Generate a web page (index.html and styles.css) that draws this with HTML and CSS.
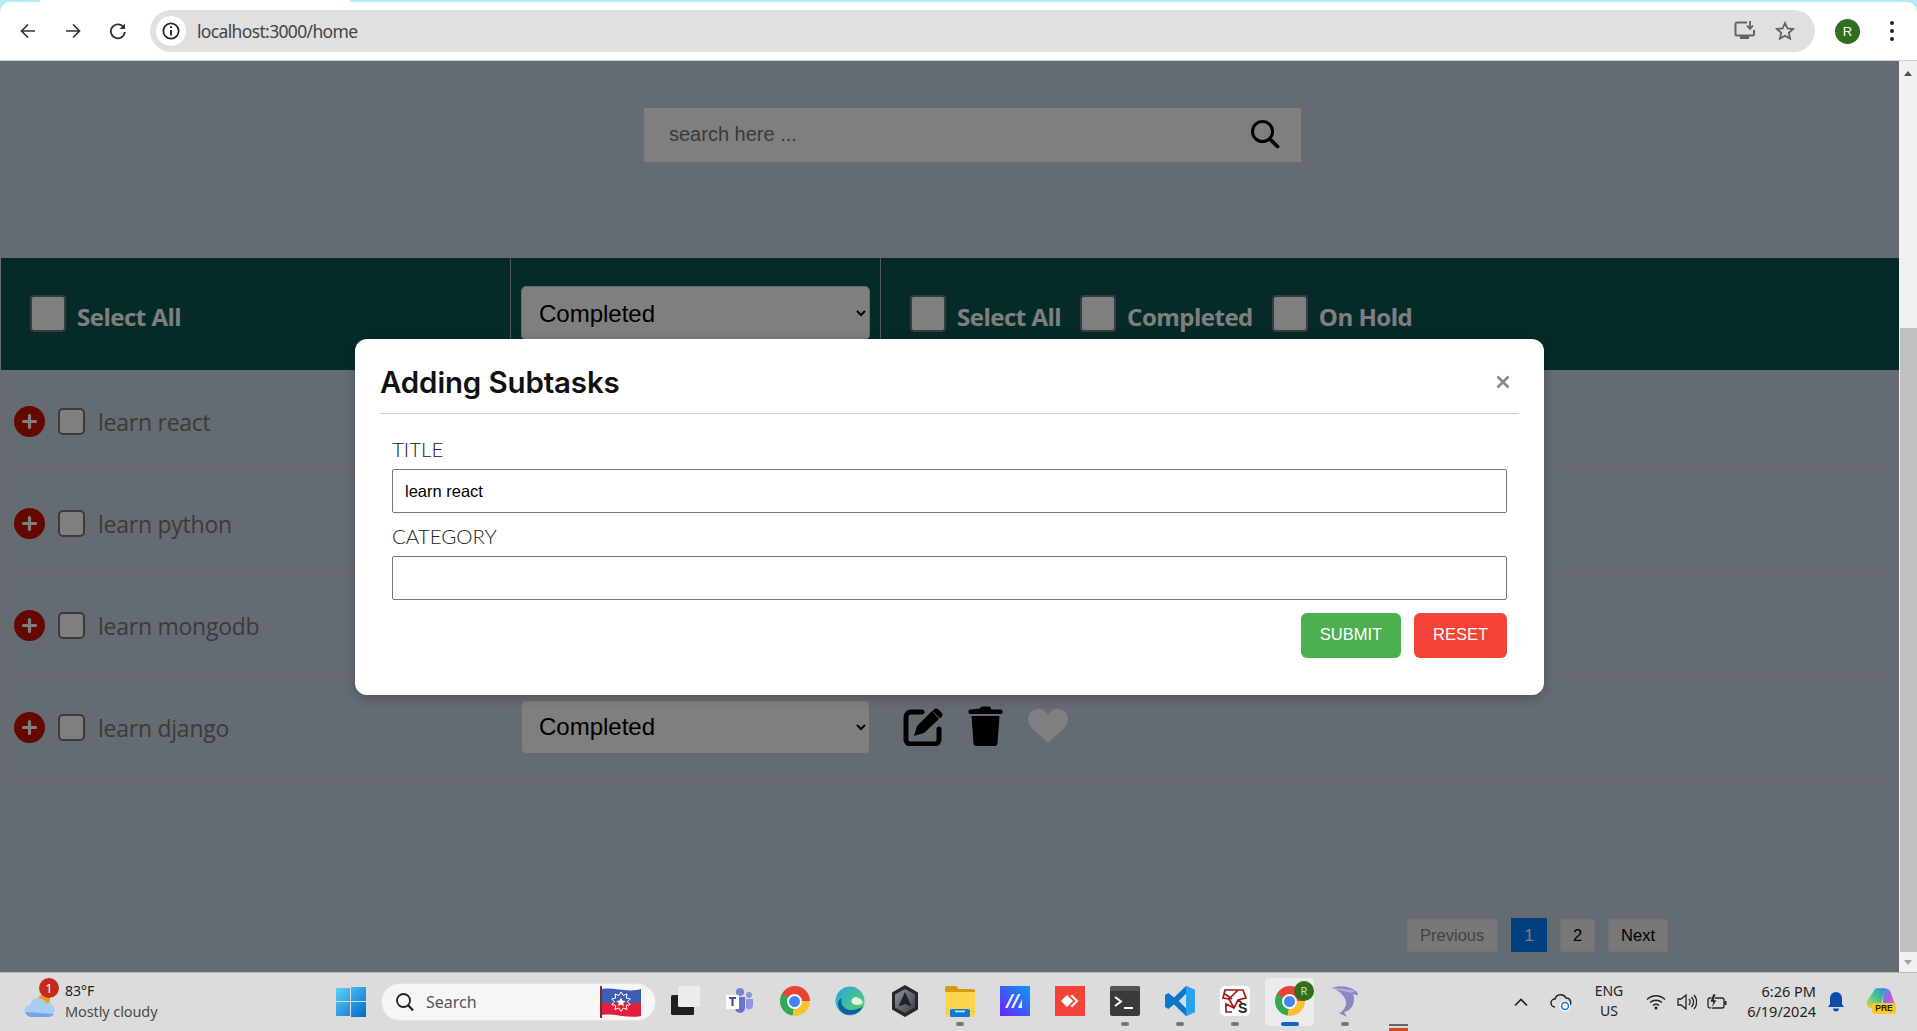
FILE: index.html
```html
<!DOCTYPE html>
<html lang="en">
<head>
<meta charset="utf-8">
<title>localhost:3000/home</title>
<link rel="stylesheet" href="styles.css">
</head>
<body>
<svg class="defs" width="0" height="0">
  <symbol id="i-edit" viewBox="0 0 40 40">
    <path d="M19 6H8a5 5 0 0 0-5 5v23a4 4 0 0 0 4 4h25a4 4 0 0 0 4-4V23" fill="none" stroke="#000" stroke-width="5" stroke-linecap="round"/>
    <path d="M11 30l3-10L29 5l7 8-15 14z" fill="#000"/>
    <path d="M31 3.500a3 3 0 0 1 4.500 0l3 3a3 3 0 0 1 0 4.500l-1.500 1.500-7.500-7.500z" fill="#000"/>
  </symbol>
  <symbol id="i-trash" viewBox="0 0 35 40">
    <path d="M12 2.500a2.500 2.500 0 0 1 2.500-2h6a2.500 2.500 0 0 1 2.500 2v1h9.500a2.200 2.200 0 0 1 0 4.500h-30a2.200 2.200 0 0 1 0-4.500z" fill="#000"/>
    <path d="M3.500 10h28l-2 27a3 3 0 0 1-3 3h-18a3 3 0 0 1-3-3z" fill="#000"/>
  </symbol>
  <symbol id="i-heart" viewBox="0 0 40 35">
    <path d="M20 35L3.500 19.500C-1 15-1 8 3 4c4.500-4.500 11.500-4 15 0l2 2.500 2-2.500c3.500-4 10.500-4.500 15 0 4 4 4 11-.5 15.500z" fill="#fff"/>
  </symbol>
  <symbol id="i-plus" viewBox="0 0 31 31">
    <circle cx="15.500" cy="15.500" r="15.500" fill="#c81000"/>
    <path d="M15.500 9.500v12M9.500 15.500h12" stroke="#fff" stroke-width="3.200" stroke-linecap="round"/>
  </symbol>
</svg>

<header class="browser">
  <div class="toolbar">
    <button class="nav-btn" aria-label="Back"><svg width="20" height="20" viewBox="0 0 20 20"><path d="M17 10H4M10 3.500L3.500 10l6.500 6.500" fill="none" stroke="#333" stroke-width="1.700"/></svg></button>
    <button class="nav-btn" aria-label="Forward"><svg width="20" height="20" viewBox="0 0 20 20"><path d="M3 10h13M10 3.500l6.500 6.500-6.500 6.500" fill="none" stroke="#333" stroke-width="1.700"/></svg></button>
    <button class="nav-btn" aria-label="Reload"><svg width="20" height="20" viewBox="0 0 20 20"><path d="M16 7a7 7 0 1 0 .8 4" fill="none" stroke="#333" stroke-width="1.800"/><path d="M17 2.500V8h-5.500z" fill="#333"/></svg></button>
    <div class="omnibox">
      <span class="site-info"><svg width="20" height="20" viewBox="0 0 20 20"><circle cx="10" cy="10" r="7.700" fill="none" stroke="#222" stroke-width="1.700"/><path d="M10 9v5.500" stroke="#222" stroke-width="1.900"/><circle cx="10" cy="6.200" r="1.100" fill="#222"/></svg></span>
      <span class="url">localhost:3000/home</span>
      <span class="omni-right">
        <svg width="22" height="20" viewBox="0 0 22 20"><path d="M13 1.500H3a1.500 1.500 0 0 0-1.500 1.500v10A1.500 1.500 0 0 0 3 14.500h15.500a1.500 1.500 0 0 0 1.500-1.500V9" fill="none" stroke="#5f6368" stroke-width="2"/><path d="M6 15h9v3H6z" fill="#5f6368"/><path d="M16 0v7M13 4.500l3 3.300 3-3.300" fill="none" stroke="#5f6368" stroke-width="1.800"/></svg>
        <svg width="20" height="20" viewBox="0 0 20 20"><path d="M10 2l2.400 5.400 5.800.6-4.400 3.900 1.300 5.700L10 14.700l-5.100 2.900 1.300-5.700L1.800 8l5.800-.6z" fill="none" stroke="#5f6368" stroke-width="1.800"/></svg>
      </span>
    </div>
    <span class="avatar">R</span>
    <span class="kebab"><i></i><i></i><i></i></span>
  </div>
</header>

<div class="viewport">
  <main class="page">
    <section class="search-wrap">
      <div class="search-box">
        <input class="search-input" type="text" placeholder="search here ...">
        <svg class="search-icon" width="30" height="30" viewBox="0 0 30 30"><circle cx="12.500" cy="12.500" r="10" fill="none" stroke="#000" stroke-width="3"/><path d="M20 20l7.500 7.500" stroke="#000" stroke-width="3.800" stroke-linecap="round"/></svg>
      </div>
    </section>

    <section class="tasks">
      <div class="tasks-head">
        <div class="head-cell head-first">
          <label class="head-check"><input class="check-lg" type="checkbox"><span>Select All</span></label>
        </div>
        <div class="head-cell head-second">
          <select class="status"><option>Completed</option></select>
        </div>
        <div class="head-cell head-third">
          <label class="head-check"><input class="check-lg" type="checkbox"><span>Select All</span></label>
          <label class="head-check"><input class="check-lg" type="checkbox"><span>Completed</span></label>
          <label class="head-check"><input class="check-lg" type="checkbox"><span>On Hold</span></label>
        </div>
      </div>

      <div class="task-row">
        <div class="task-name"><svg class="plus"><use href="#i-plus"/></svg><input class="check" type="checkbox"><span>learn react</span></div>
        <div class="task-status"><select class="status"><option>Completed</option></select></div>
        <div class="task-actions"><svg class="ic-edit"><use href="#i-edit"/></svg><svg class="ic-trash"><use href="#i-trash"/></svg><svg class="ic-heart"><use href="#i-heart"/></svg></div>
      </div>
      <div class="task-row">
        <div class="task-name"><svg class="plus"><use href="#i-plus"/></svg><input class="check" type="checkbox"><span>learn python</span></div>
        <div class="task-status"><select class="status"><option>Completed</option></select></div>
        <div class="task-actions"><svg class="ic-edit"><use href="#i-edit"/></svg><svg class="ic-trash"><use href="#i-trash"/></svg><svg class="ic-heart"><use href="#i-heart"/></svg></div>
      </div>
      <div class="task-row">
        <div class="task-name"><svg class="plus"><use href="#i-plus"/></svg><input class="check" type="checkbox"><span>learn mongodb</span></div>
        <div class="task-status"><select class="status"><option>Completed</option></select></div>
        <div class="task-actions"><svg class="ic-edit"><use href="#i-edit"/></svg><svg class="ic-trash"><use href="#i-trash"/></svg><svg class="ic-heart"><use href="#i-heart"/></svg></div>
      </div>
      <div class="task-row">
        <div class="task-name"><svg class="plus"><use href="#i-plus"/></svg><input class="check" type="checkbox"><span>learn django</span></div>
        <div class="task-status"><select class="status"><option>Completed</option></select></div>
        <div class="task-actions"><svg class="ic-edit"><use href="#i-edit"/></svg><svg class="ic-trash"><use href="#i-trash"/></svg><svg class="ic-heart"><use href="#i-heart"/></svg></div>
      </div>
    </section>

    <nav class="pager">
      <a class="pg pg-muted">Previous</a>
      <a class="pg pg-active">1</a>
      <a class="pg pg-num">2</a>
      <a class="pg">Next</a>
    </nav>

    <div class="backdrop">
      <div class="modal">
        <div class="modal-head">
          <h2 class="modal-title">Adding Subtasks</h2>
          <svg class="modal-close" width="14" height="14" viewBox="0 0 14 14"><path d="M1.500 1.500l11 11M12.500 1.500l-11 11" stroke="#8a8a8a" stroke-width="2.600"/></svg>
        </div>
        <form class="modal-body">
          <label class="field-label">TITLE</label>
          <input class="field" type="text" value="learn react">
          <label class="field-label">CATEGORY</label>
          <input class="field" type="text">
          <div class="modal-actions">
            <button class="btn btn-submit" type="button">SUBMIT</button>
            <button class="btn btn-reset" type="button">RESET</button>
          </div>
        </form>
      </div>
    </div>
  </main>
  <aside class="scrollbar">
    <div class="sb-btn"><i class="tri-up"></i></div>
    <div class="sb-track"></div>
    <div class="sb-thumb"></div>
    <div class="sb-btn sb-btn-down"><i class="tri-down"></i></div>
  </aside>
</div>

<footer class="taskbar">
  <div class="weather">
    <span class="weather-icon">
      <svg width="32" height="30" viewBox="0 0 32 30"><circle cx="20" cy="11" r="6" fill="#f39a1e"/><path d="M7 28a6 6 0 0 1-1-12 8.500 8.500 0 0 1 16-2 7 7 0 0 1 3 14z" fill="#a9cdf0"/><path d="M2 23a5 5 0 0 0 5 5h18a7 7 0 0 0 5-3z" fill="#6fa8e3"/></svg>
      <b class="badge">1</b>
    </span>
    <span class="weather-text"><span class="w-temp">83°F</span><span class="w-desc">Mostly cloudy</span></span>
  </div>
  <span class="win-logo">
    <svg width="30" height="30" viewBox="0 0 30 30"><defs><linearGradient id="wg" x1="0" y1="0" x2="1" y2="1"><stop offset="0" stop-color="#5fd4fb"/><stop offset="1" stop-color="#0068c9"/></linearGradient></defs><path d="M0 1h14v13H0zM15 0h15v14H15zM0 15h14v14H0zM15 15h15v15H15z" fill="url(#wg)"/></svg>
  </span>
  <div class="ts-search">
    <svg width="20" height="20" viewBox="0 0 20 20"><circle cx="8.500" cy="8.500" r="6.500" fill="none" stroke="#222" stroke-width="1.800"/><path d="M13 13l5 5.500" stroke="#222" stroke-width="2.200"/></svg>
    <span class="ts-label">Search</span>
    <svg class="ts-flag" width="44" height="32" viewBox="0 0 44 32"><path d="M2 0v32" stroke="#7a2c2c" stroke-width="2"/><path d="M3 3c12-2 26 4 39 0v14H3z" fill="#3e5eb1"/><path d="M3 17h39v13c-13 3-26-3-39-1z" fill="#e3203c"/><path d="M22 6l2.200 3.500 3.800-1.500-.7 4 4 1-3 2.700 3 2.800-4 1 .7 4-3.800-1.500L22 25.500 19.800 22 16 23.500l.7-4-4-1 3-2.800-3-2.700 4-1-.7-4 3.800 1.500z" fill="none" stroke="#fff" stroke-width="1"/><path d="M22 11.500l1.400 3 3.200.4-2.400 2.100.7 3.200-2.900-1.700-2.900 1.700.7-3.200-2.400-2.100 3.200-.4z" fill="#fff"/></svg>
  </div>
  <div class="apps">
    <span class="app"><svg width="30" height="30" viewBox="0 0 30 30"><rect x="1" y="9" width="23" height="20" rx="1.500" fill="#1f1f1f"/><rect x="8" y="0" width="22" height="21" rx="1.500" fill="#ececec"/></svg></span>
    <span class="app"><svg width="30" height="30" viewBox="0 0 30 30"><circle cx="15" cy="6" r="4" fill="#7b83d6"/><circle cx="24" cy="9" r="3" fill="#8f96e0"/><path d="M10 11h10v11a5 5 0 0 1-10 0z" fill="#6a72c9"/><path d="M21 13h7v7a4 4 0 0 1-7 2z" fill="#8f96e0"/><rect x="1" y="9" width="13" height="14" fill="#fff"/><path d="M4 12h7M7.500 12v8" stroke="#4b53a8" stroke-width="2.200"/></svg></span>
    <span class="app"><span class="chrome"></span></span>
    <span class="app"><svg width="30" height="30" viewBox="0 0 30 30"><defs><linearGradient id="eg" x1="0" y1="0" x2="1" y2="1"><stop offset="0" stop-color="#2aa5df"/><stop offset="1" stop-color="#5ed45c"/></linearGradient></defs><circle cx="15" cy="15" r="14.500" fill="url(#eg)"/><path d="M28 20C25 28 15 31 8 27 2 23 1 14 7 12c-3 6 3 13 10 12 5-.5 9-2 11-4z" fill="#0c5fa8"/><path d="M28 17c-1-5-8-8-11-4-2 3 1 6 5 6 3 0 5-1 6-2z" fill="#dff3df"/></svg></span>
    <span class="app"><svg width="28" height="32" viewBox="0 0 28 32"><defs><linearGradient id="hg" x1="0" y1="0" x2="1" y2="1"><stop offset="0" stop-color="#8d949b"/><stop offset="1" stop-color="#3a3f45"/></linearGradient></defs><path d="M14 0l13 7.500v17L14 32 1 24.500v-17z" fill="#24272b"/><path d="M14 4l10 5.500v13L14 28 4 22.500v-13z" fill="url(#hg)"/><path d="M14 7l6.500 14.500L14 19l-6.500 2.500z" fill="#1f2226"/></svg></span>
    <span class="app app-open"><svg width="30" height="32" viewBox="0 0 30 32"><path d="M0 3a2 2 0 0 1 2-2h9l3 3h14a2 2 0 0 1 2 2v4H0z" fill="#d89a12"/><path d="M0 7h30v23a2 2 0 0 1-2 2H2a2 2 0 0 1-2-2z" fill="#fdd44f"/><rect x="5" y="24" width="20" height="8" rx="1.500" fill="#0f78d4"/><rect x="10" y="25.500" width="10" height="1.800" fill="#bfe0fa"/></svg></span>
    <span class="app"><svg width="30" height="30" viewBox="0 0 30 30"><defs><linearGradient id="mg" x1="0" y1="1" x2="1" y2="0"><stop offset="0" stop-color="#6a22f5"/><stop offset="1" stop-color="#0a9cf5"/></linearGradient></defs><rect width="30" height="30" fill="url(#mg)"/><path d="M5 22l7-14h2.500l-7 14zM11 22l7-14h2.500l-7 14zM18 22l4-9v9z" fill="#e8eefc"/></svg></span>
    <span class="app"><svg width="30" height="30" viewBox="0 0 30 30"><rect width="30" height="30" fill="#f44236"/><path d="M12 9l6 6-6 6-6-6z" fill="#fff"/><path d="M17 8.500l6.500 6.500-6.500 6.500-1.500-1.500 5-5-5-5z" fill="#fff"/></svg></span>
    <span class="app app-open"><svg width="30" height="30" viewBox="0 0 30 30"><rect width="30" height="30" rx="2.500" fill="#3a3a3a"/><path d="M0 2.500A2.500 2.500 0 0 1 2.500 0h27v5H0z" fill="#555"/><path d="M5 11l6 4.500-6 4.500" fill="none" stroke="#fff" stroke-width="2"/><path d="M14 22h9" stroke="#fff" stroke-width="2"/></svg></span>
    <span class="app app-open"><svg width="30" height="30" viewBox="0 0 30 30"><path d="M21 0l9 4v22l-9 4-12-11.500L3.500 23 0 21v-12l3.500-2L9 11.500zM21 8l-7 7 7 7z" fill="#0e78c8"/><path d="M21 0l9 4v22l-9 4z" fill="#2aa3ef"/><path d="M21 8l-7 7 7 7z" fill="#dcdcdc"/></svg></span>
    <span class="app app-open"><svg width="30" height="30" viewBox="0 0 30 30"><rect width="30" height="30" rx="5" fill="#fff"/><path d="M5 4h18l3 8-8 2-4 8-5-9-6-1zM9 13l9-9M14 22l-8-4V26h6M18 14l4 3M5 8l7 5" fill="none" stroke="#a5161b" stroke-width="1.700"/><text class="ks-s" x="18" y="27">S</text></svg></span>
    <span class="app app-active"><span class="chrome chrome-sm"></span><b class="app-badge">R</b></span>
    <span class="app app-open"><svg width="28" height="32" viewBox="0 0 28 32"><path d="M1 3c8-3 17-2 24 3 3 2 2 5 0 4l-3-1c2 5 1 11-3 15-2 2-4 3-6 3l3 5-8-4c3-1 6-4 7-9C16 14 10 6 1 3z" fill="#8a86c9"/><path d="M1 3c6 0 15 1 24 3l-5 2C14 6 8 6 1 3z" fill="#b3b0e0"/></svg></span>
  </div>
  <span class="tray-glitch"></span>
  <div class="tray">
    <svg class="tray-chevron" width="16" height="10" viewBox="0 0 16 10"><path d="M2 8.500l6-6 6 6" fill="none" stroke="#222" stroke-width="1.700"/></svg>
    <svg class="tray-cloud" width="22" height="20" viewBox="0 0 22 20"><path d="M5 15a4 4 0 0 1 0-8 6 6 0 0 1 11-1 4.500 4.500 0 0 1 3 8" fill="#dcdcdc" stroke="#222" stroke-width="1.500"/><circle cx="15" cy="14" r="5.500" fill="#fff"/><circle cx="15" cy="14" r="3.500" fill="none" stroke="#0f78d4" stroke-width="1.500"/></svg>
    <span class="lang"><span>ENG</span><span>US</span></span>
    <svg class="tray-wifi" width="20" height="16" viewBox="0 0 20 16"><path d="M1 5.500c5-5 13-5 18 0M4 8.500c3.500-3 8.500-3 12 0M7 11.500c1.800-1.400 4.200-1.400 6 0" fill="none" stroke="#222" stroke-width="1.400"/><circle cx="10" cy="14" r="1.500" fill="#222"/></svg>
    <svg class="tray-vol" width="20" height="18" viewBox="0 0 20 18"><path d="M1 6h3l5-4v14l-5-4H1z" fill="none" stroke="#222" stroke-width="1.300"/><path d="M12 6c1.500 2 1.500 4 0 6M14.500 4c2.500 3 2.500 7 0 10M17 2c3.500 4 3.500 10 0 14" fill="none" stroke="#222" stroke-width="1.300"/></svg>
    <svg class="tray-batt" width="20" height="18" viewBox="0 0 20 18"><rect x="1" y="5" width="16" height="10" rx="2" fill="none" stroke="#222" stroke-width="1.300"/><rect x="17.500" y="8" width="2" height="4" fill="#222"/><path d="M6 1L3 9h3l-2 7 6-9H7l2-6z" fill="#222" stroke="#dcdcdc" stroke-width=".7"/></svg>
    <span class="clock"><span>6:26 PM</span><span>6/19/2024</span></span>
    <svg class="tray-bell" width="16" height="20" viewBox="0 0 16 20"><path d="M8 0a6 6 0 0 1 6 6v6l2 3H0l2-3V6a6 6 0 0 1 6-6z" fill="#0a4dae"/><path d="M5 16.500h6c0 2-1.300 3-3 3s-3-1-3-3z" fill="#0a4dae"/></svg>
    <span class="copilot">
      <svg width="30" height="26" viewBox="0 0 28 24"><defs><linearGradient id="cg1" x1="0" y1="1" x2="1" y2="0"><stop offset="0" stop-color="#f7d23e"/><stop offset=".5" stop-color="#4cc78a"/><stop offset="1" stop-color="#2a8ae8"/></linearGradient><linearGradient id="cg2" x1="0" y1="0" x2="1" y2="1"><stop offset="0" stop-color="#2aa0e8"/><stop offset=".5" stop-color="#b45be0"/><stop offset="1" stop-color="#f26aa5"/></linearGradient></defs><path d="M9 1h9l-5 19H5C1 20 0 16 1 13z" fill="url(#cg1)"/><path d="M17 1c3 0 5 1 6 4l4 11c1 3-1 5-4 5h-8z" fill="url(#cg2)"/></svg>
      <b class="pre">PRE</b>
    </span>
  </div>
</footer>
</body>
</html>
```
FILE: styles.css
```css
* { box-sizing: border-box; }
html, body { margin: 0; height: 100%; overflow: hidden; }
body {
  width: 1917px;
  height: 1031px;
  display: flex;
  flex-direction: column;
  font-family: "Liberation Sans", Arial, sans-serif;
  background: #fff;
}
.defs { position: absolute; }

/* browser chrome */
.browser {
  height: 61px;
  flex: none;
  padding-top: 2px;
  background: linear-gradient(90deg, #b5ebf5 0, #b5ebf5 40px, #fff 40px, #fff 350px, #b5ebf5 350px);
}
.toolbar {
  height: 59px;
  display: flex;
  align-items: center;
  padding: 0 0 0 13px;
  background: #fff;
  border-bottom: 1px solid #ccc;
  border-radius: 10px 10px 0 0;
}
.nav-btn {
  width: 30px;
  height: 30px;
  margin-right: 15px;
  padding: 0;
  border: 0;
  background: none;
  display: flex;
  align-items: center;
  justify-content: center;
}
.omnibox {
  width: 1665px;
  height: 42px;
  margin-left: 2px;
  display: flex;
  align-items: center;
  padding-left: 6px;
  border-radius: 21px;
  background: #e0e0e0;
}
.site-info {
  width: 30px;
  height: 30px;
  border-radius: 50%;
  background: #fff;
  display: flex;
  align-items: center;
  justify-content: center;
}
.url {
  margin-left: 11px;
  font: 17.5px "Noto Sans", sans-serif;
  letter-spacing: -.65px;
  color: #444;
}
.omni-right {
  margin-left: auto;
  margin-right: 20px;
  display: flex;
  align-items: center;
  gap: 19px;
}
.avatar {
  width: 25px;
  height: 25px;
  margin-left: 20px;
  border-radius: 50%;
  background: #2f6f1e;
  color: #fff;
  font-size: 13px;
  display: flex;
  align-items: center;
  justify-content: center;
}
.kebab {
  margin-left: 30px;
  display: flex;
  flex-direction: column;
  gap: 4px;
}
.kebab i {
  width: 4px;
  height: 4px;
  border-radius: 50%;
  background: #222;
}

/* viewport */
.viewport {
  flex: 1;
  min-height: 0;
  display: flex;
}
.page {
  position: relative;
  flex: 1;
  background: #cad6e6;
  overflow: hidden;
}
.scrollbar {
  width: 18px;
  flex: none;
  display: flex;
  flex-direction: column;
  background: #f1f1f1;
}
.sb-btn {
  height: 24px;
  flex: none;
  display: flex;
  align-items: center;
  justify-content: center;
}
.sb-btn-down { height: 20px; }
.tri-up { border: 4.500px solid transparent; border-top: 0; border-bottom: 5px solid #505050; }
.tri-down { border: 4.500px solid transparent; border-bottom: 0; border-top: 5px solid #a3a3a3; }
.sb-track { height: 243px; flex: none; }
.sb-thumb { flex: 1; margin-left: 1px; background: #c0c0c0; }

/* search */
.search-wrap {
  height: 197px;
  padding: 46px 0 0 643px;
}
.search-box {
  width: 659px;
  height: 56px;
  display: flex;
  align-items: center;
  background: #fff;
  border: 1px solid #d4d4d4;
  padding: 0 21px 2px 23px;
}
.search-input {
  flex: 1;
  border: 0;
  outline: 0;
  background: none;
  font: 20px "Liberation Sans", sans-serif;
}
.search-input::placeholder { color: #757575; }

/* tasks */
.tasks { border-left: 1px solid #d8d8d8; }
.tasks-head {
  height: 112px;
  display: grid;
  grid-template-columns: 509px 371px 1fr;
  background: #0a5652;
}
.head-cell { display: flex; align-items: flex-start; }
.head-first { padding: 37px 0 0 29px; }
.head-second {
  padding: 28px 0 0 10px;
  border-left: 1px solid #9fb5b4;
  border-right: 1px solid #9fb5b4;
}
.head-third { padding: 37px 0 0 29px; gap: 19px; }
.head-check {
  display: flex;
  align-items: flex-start;
  gap: 11px;
  font: 700 24px "Open Sans", sans-serif;
  letter-spacing: -.5px;
  color: #fff;
}
.head-check span { margin-top: 6px; line-height: 32px; }
.check-lg, .check {
  appearance: none;
  margin: 0;
  background: #fff;
  border: 2px solid #767676;
  border-radius: 4px;
}
.check-lg { width: 36px; height: 37px; }
.check { width: 27px; height: 27px; border-radius: 5px; }
.status {
  width: 349px;
  height: 54px;
  padding-left: 13px;
  border: 1px solid #d4d4d4;
  border-radius: 5px;
  background: #fff;
  color: #000;
  font: 24px "Liberation Sans", sans-serif;
}
.task-row {
  height: 102px;
  display: grid;
  grid-template-columns: 509px 371px 1fr;
  border-bottom: 1px solid #dedad6;
}
.task-name {
  display: flex;
  align-items: center;
  gap: 13px;
  padding: 2px 0 0 13px;
  font: 23px "Open Sans", sans-serif;
  letter-spacing: -.25px;
  color: #777;
}
.plus { width: 31px; height: 31px; flex: none; }
.task-status {
  display: flex;
  align-items: center;
  padding-left: 10px;
  border-left: 1px solid #d4d8de;
  border-right: 1px solid #d4d8de;
}
.task-actions {
  display: flex;
  align-items: center;
  padding: 0 0 2px 22px;
}
.ic-edit { width: 40px; height: 40px; }
.ic-trash { width: 35px; height: 40px; margin-left: 25px; }
.ic-heart { width: 40px; height: 35px; margin-left: 25px; }

/* pagination */
.pager {
  position: absolute;
  right: 231px;
  top: 857px;
  display: flex;
  align-items: center;
  gap: 13px;
  font-size: 16.500px;
}
.pg {
  height: 33px;
  padding: 0 12px;
  display: flex;
  align-items: center;
  background: #f0f0f0;
  border: 1px solid #e4e4e4;
  color: #000;
}
.pg-muted { color: #888; width: 91px; }
.pg-num { width: 35px; justify-content: center; padding: 0; }
.pg-active {
  width: 36px;
  height: 34px;
  justify-content: center;
  padding: 0;
  background: #0081ff;
  border-color: #0081ff;
  color: #fff;
}

/* modal */
.backdrop {
  position: absolute;
  inset: 0;
  background: rgba(0, 0, 0, .5);
  padding-top: 278px;
}
.modal {
  width: 1189px;
  height: 356px;
  margin: 0 auto;
  padding: 0 25px;
  background: #fff;
  border-radius: 12px;
  box-shadow: 0 3px 12px rgba(0, 0, 0, .22);
}
.modal-head {
  height: 75px;
  display: flex;
  align-items: center;
  justify-content: space-between;
  border-bottom: 1px solid #cfcfcf;
  padding: 11px 9px 0 0;
}
.modal-title {
  margin: 0;
  font: 600 29.500px Inter, sans-serif;
  letter-spacing: -.15px;
  color: #111;
}
.modal-body { padding: 23px 12px 0 12px; display: flex; flex-direction: column; }
.field-label {
  height: 22px;
  font: 300 20.500px/25px Lato, sans-serif;
  color: #222;
}
.field {
  height: 44px;
  margin: 10px 0 11px;
  padding: 0 12px;
  border: 1px solid #767676;
  border-radius: 2px;
  outline: 0;
  font: 16.500px "Liberation Sans", sans-serif;
  color: #000;
}
.modal-actions {
  display: flex;
  justify-content: flex-end;
  gap: 13px;
  margin-top: 2px;
}
.btn {
  height: 45px;
  border: 0;
  border-radius: 6px;
  color: #fff;
  font: 16.500px "Liberation Sans", sans-serif;
  padding: 0 0 3px;
}
.btn-submit { width: 100px; background: #4caf50; }
.btn-reset { width: 93px; background: #f44336; }

/* taskbar */
.taskbar {
  height: 59px;
  flex: none;
  display: flex;
  align-items: center;
  position: relative;
  background: #dcdcdc;
  border-top: 1px solid #b9b9b9;
  font-family: "Noto Sans", sans-serif;
  color: #222;
}
.weather {
  width: 336px;
  display: flex;
  align-items: center;
  padding-left: 24px;
}
.weather-icon { position: relative; width: 41px; height: 34px; display: block; padding-top: 4px; }
.badge {
  position: absolute;
  left: 15px;
  top: -7px;
  width: 20px;
  height: 20px;
  border-radius: 50%;
  background: #c42b1c;
  color: #fff;
  font: 400 13px/20px "Noto Sans", sans-serif;
  text-align: center;
}
.weather-text { display: flex; flex-direction: column; font-size: 14.500px; line-height: 20px; margin-top: -2px; }
.w-temp { color: #222; font-size: 14px; }
.w-desc { color: #4a4a4a; letter-spacing: -.1px; }
.win-logo { width: 45px; display: flex; }
.ts-search {
  width: 275px;
  height: 38px;
  display: flex;
  align-items: center;
  padding-left: 13px;
  border-radius: 19px;
  background: #f6f6f6;
  border: 1px solid #e4e4e4;
}
.ts-label { margin-left: 11px; font-size: 16px; color: #555; }
.ts-flag { margin-left: auto; margin-right: 12px; }
.apps { display: flex; margin-left: 1px; }
.app {
  position: relative;
  width: 55px;
  height: 48px;
  display: flex;
  align-items: center;
  justify-content: center;
  padding-bottom: 2px;
}
.app-open::after, .app-active::after {
  content: "";
  position: absolute;
  bottom: 0;
  left: 50%;
  width: 8px;
  height: 4px;
  margin-left: -4px;
  border-radius: 2px;
  background: #777;
}
.app-active::before {
  content: "";
  position: absolute;
  inset: 0 3px;
  border-radius: 4px;
  background: #ececec;
}
.app-active::after { width: 18px; margin-left: -9px; background: #0a67c9; }
.chrome {
  position: relative;
  width: 30px;
  height: 30px;
  border-radius: 50%;
  background: conic-gradient(from -60deg, #ea4335 0 150deg, #fbc02d 150deg 250deg, #34a853 250deg 360deg);
}
.chrome::after {
  content: "";
  position: absolute;
  inset: 7.500px;
  border-radius: 50%;
  background: #4285f4;
  border: 2.500px solid #fff;
}
.app-badge {
  position: absolute;
  left: 32px;
  top: 3px;
  width: 20px;
  height: 20px;
  border-radius: 50%;
  background: #2f6f1e;
  color: #cfe0c8;
  font: 400 11px/20px "Noto Sans", sans-serif;
  text-align: center;
}
.ks-s { font: 700 14px "Liberation Sans", sans-serif; fill: #222; }
.tray-glitch {
  position: absolute;
  left: 1389px;
  bottom: 0;
  width: 19px;
  height: 7px;
  background: linear-gradient(#666 0 2px, #d8d8d8 2px 4px, #d9482c 4px);
}
.tray {
  position: absolute;
  left: 1513px;
  top: 0;
  bottom: 0;
  width: 404px;
  display: flex;
  align-items: center;
}
.tray-cloud { margin-left: 21px; }
.lang, .clock {
  display: flex;
  flex-direction: column;
  font-size: 14.500px;
  line-height: 20px;
}
.lang { width: 40px; margin-left: 17px; align-items: center; font-size: 14px; margin-top: -2px; }
.clock { margin-top: -2px; }
.tray-wifi { margin-left: 17px; }
.tray-vol { margin-left: 11px; }
.tray-batt { margin-left: 10px; }
.clock { width: 90px; margin-left: -1px; align-items: flex-end; }
.tray-bell { margin-left: 12px; }
.copilot { position: relative; margin-left: 22px; width: 32px; height: 30px; display: block; }
.pre {
  position: absolute;
  left: 6px;
  top: 16px;
  width: 24px;
  height: 11px;
  border-radius: 3px;
  background: #ffc81e;
  color: #222;
  font: 700 8.500px/11px "Liberation Sans", sans-serif;
  text-align: center;
}
```
